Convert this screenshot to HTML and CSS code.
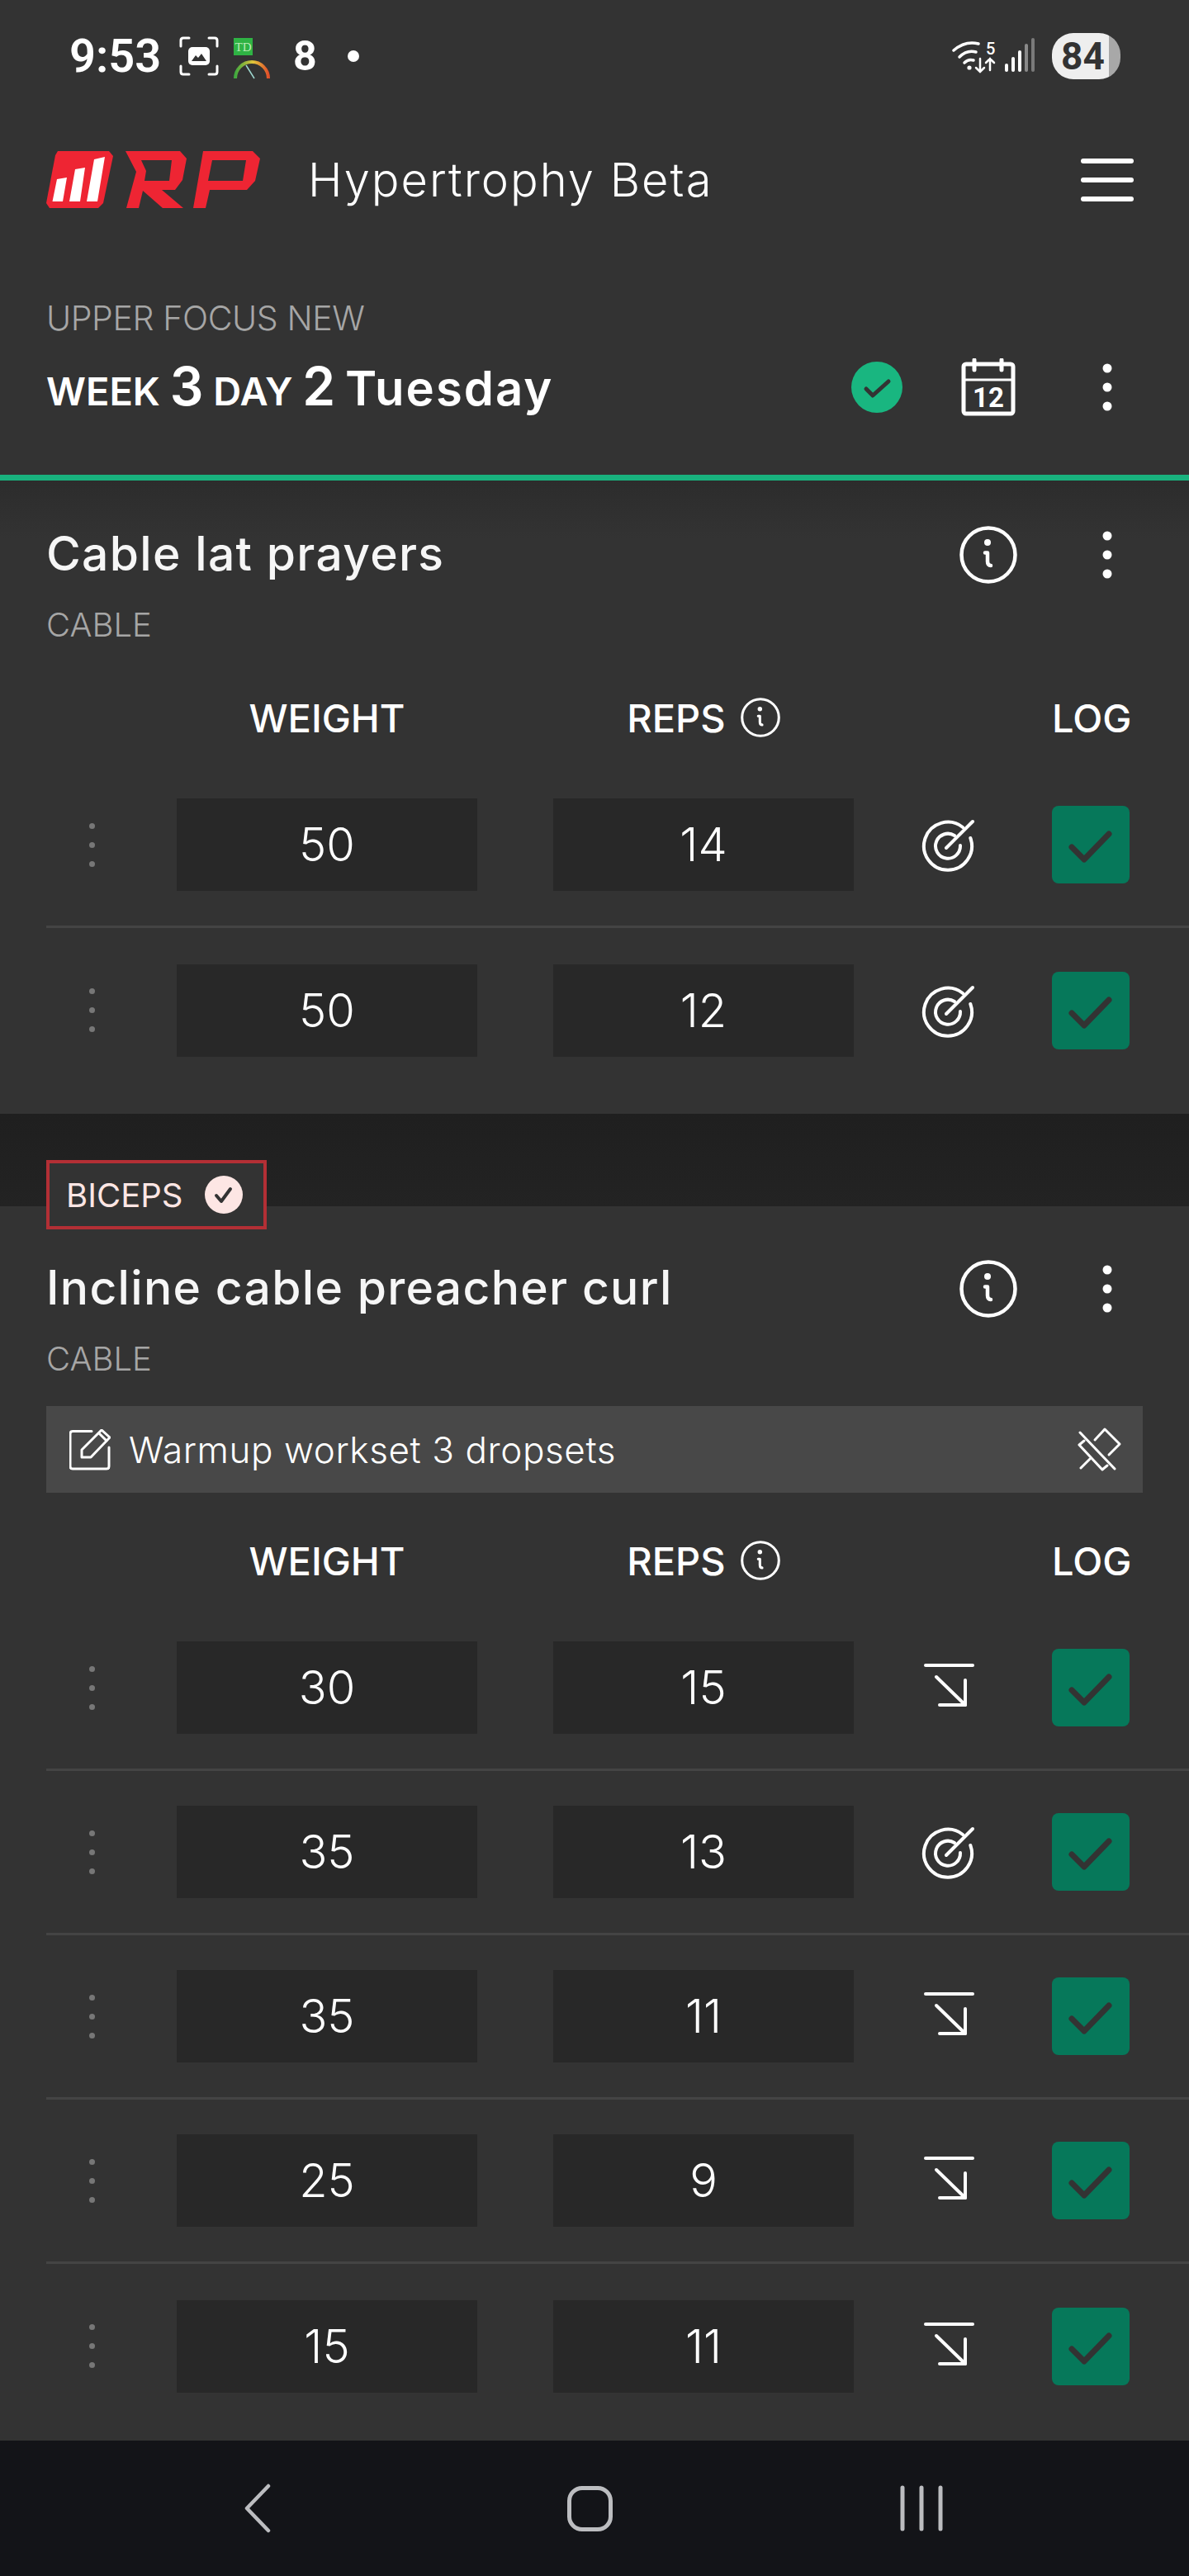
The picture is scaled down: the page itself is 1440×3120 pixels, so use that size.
FILE: index.html
```html
<!DOCTYPE html>
<html lang="en">

<head>
    <meta charset="UTF-8">
    <meta name="viewport" content="width=device-width, initial-scale=1.0">
    <title>RP Hypertrophy Beta</title>

    <link rel="stylesheet" href="styles.css">
</head>

<body>
    <svg class="sprites" width="0" height="0">
        <symbol id="i-info" viewBox="0 0 70 70">
            <circle cx="35" cy="35" r="32.5" fill="none" stroke="currentColor" stroke-width="4.5" />
            <circle cx="34" cy="20" r="4" fill="currentColor" />
            <path d="M31 32.5h3V43q0 5 4 5" fill="none" stroke="currentColor" stroke-width="4.5" stroke-linecap="round" stroke-linejoin="round" />
        </symbol>
        <symbol id="i-kebab" viewBox="0 0 70 70">
            <circle cx="35" cy="12" r="5.5" fill="currentColor" />
            <circle cx="35" cy="35" r="5.5" fill="currentColor" />
            <circle cx="35" cy="58" r="5.5" fill="currentColor" />
        </symbol>
        <symbol id="i-target" viewBox="0 0 70 70">
            <g fill="none" stroke="currentColor" stroke-width="4" stroke-linecap="round">
                <path d="M51 14A29 29 0 1 0 60.3 27" />
                <path d="M41 24A15 15 0 1 0 48 36" />
                <path d="M31 39L63 7" />
            </g>
        </symbol>
        <symbol id="i-drop" viewBox="0 0 70 70">
            <g fill="none" stroke="currentColor" stroke-width="4" stroke-linecap="round" stroke-linejoin="round">
                <path d="M6 8H63" />
                <path d="M19 22L54 56" />
                <path d="M54 26V56H23" />
            </g>
        </symbol>
        <symbol id="i-check" viewBox="0 0 94 94">
            <path d="M24 50L39 65L69 34" fill="none" stroke="currentColor" stroke-width="7" stroke-linecap="round" stroke-linejoin="round" />
        </symbol>
    </svg>

    <div class="status-bar">
        <span class="clock">9:53</span>
        <svg class="st-shot" width="48" height="48" viewBox="0 0 48 48">
            <path d="M2 12V5q0-3 3-3h7M36 2h7q3 0 3 3v7M46 36v7q0 3-3 3h-7M12 46H5q-3 0-3-3v-7" fill="none" stroke="#fff" stroke-width="3" stroke-linecap="round" />
            <rect x="11" y="13" width="26" height="22" rx="5" fill="#fff" />
            <path d="M15 30l5-7 3 3 4-5 6 9z" fill="#333" />
        </svg>
        <svg class="st-td" width="48" height="50" viewBox="0 0 48 50">
            <rect x="1" y="0" width="23" height="21" fill="#2fb344" />
            <text x="12.5" y="16" class="st-td-text">TD</text>
            <path d="M3 49A20 20 0 0 1 43 49" fill="none" stroke="url(#gauge)" stroke-width="4" />
            <path d="M16 33L26 49" stroke="#9fd8d0" stroke-width="1.5" />
            <defs>
                <linearGradient id="gauge">
                    <stop offset="0" stop-color="#3fa93f" />
                    <stop offset="0.55" stop-color="#e4c53a" />
                    <stop offset="1" stop-color="#e0502a" />
                </linearGradient>
            </defs>
        </svg>
        <span class="st-eight">8</span>
        <span class="st-dot"></span>
        <span class="st-spacer"></span>
        <svg class="st-wifi" width="54" height="42" viewBox="0 0 54 42">
            <g fill="none" stroke="#fff" stroke-width="3.5" stroke-linecap="round">
                <path d="M2 14Q16 2 32 6" />
                <path d="M9 22Q18 13 29 16" />
                <path d="M15 29Q20 24 26 26" />
                <path d="M34 24V40M29 35l5 5 5-5" stroke-width="2.5" />
                <path d="M46 38V24M41 29l5-5 5 5" stroke-width="2.5" />
            </g>
            <circle cx="21" cy="35" r="2.6" fill="#fff" />
            <text x="41" y="19" class="st-wifi-text">5</text>
        </svg>
        <svg class="st-signal" width="36" height="42" viewBox="0 0 36 42">
            <g stroke-width="4" stroke-linecap="round">
                <path d="M2 33V39" stroke="#fff" />
                <path d="M10 25V39" stroke="#fff" />
                <path d="M18 17V39" stroke="#fff" />
                <path d="M26 9V39" stroke="#8a8a8a" />
                <path d="M34 2V39" stroke="#7a7a7a" />
            </g>
        </svg>
        <span class="battery">84</span>
    </div>

    <header class="app-bar">
        <svg class="logo" width="260" height="70" viewBox="56 178 260 70">
            <path d="M70 178H132L137 184L125 241L119 247H60L56 241L67 183Z" fill="#ee2533" />
            <path d="M69 212L81 210L76 239H63.5ZM91 200L103 198L97 239H84ZM114 188L127 185L118 239H105Z" fill="#fff" />
            <path fill-rule="evenodd" d="M152 178H218L226 187L221 213L212 225H196L222 247H197L173 226L168 247H153L165 203ZM171 189L177 202L175 214H205L208 189Z" fill="#ee2533" />
            <path fill-rule="evenodd" d="M246 178H306L315 187L309 214L299 225H254L249 247H234ZM257 189L252 214H294L298 189Z" fill="#ee2533" />
        </svg>
        <span class="app-title">Hypertrophy Beta</span>
        <button class="menu-btn" type="button" aria-label="Menu"><i></i><i></i><i></i></button>
    </header>

    <section class="day-head">
        <div class="program">UPPER FOCUS NEW</div>
        <div class="day-row">
            <h1 class="day-title">WEEK <b>3</b> DAY <b>2</b> <em>Tuesday</em></h1>
            <div class="actions">
                <span class="done-badge">
                    <svg width="62" height="62" viewBox="0 0 62 62">
                        <path d="M18 33L26 41L45 24" fill="none" stroke="#333" stroke-width="5" stroke-linecap="round" stroke-linejoin="round" />
                    </svg>
                </span>
                <svg class="icon" width="70" height="70" viewBox="0 0 70 70">
                    <rect x="5" y="7" width="60" height="60" rx="3" fill="none" stroke="currentColor" stroke-width="5" />
                    <path d="M5 26H65" stroke="currentColor" stroke-width="3" />
                    <path d="M18 2V14M51 2V14" stroke="currentColor" stroke-width="5" stroke-linecap="round" />
                    <text x="35" y="59" class="cal-day">12</text>
                </svg>
                <svg class="icon" width="70" height="70"><use href="#i-kebab" /></svg>
            </div>
        </div>
    </section>

    <section class="card card-first">
        <div class="card-head">
            <h2 class="ex-name">Cable lat prayers</h2>
            <div class="actions">
                <svg class="icon" width="70" height="70"><use href="#i-info" /></svg>
                <svg class="icon" width="70" height="70"><use href="#i-kebab" /></svg>
            </div>
        </div>
        <div class="ex-kind">CABLE</div>
        <div class="col-heads">
            <span class="handle"></span>
            <span class="col">WEIGHT</span>
            <span class="col col-reps">REPS <svg width="48" height="48"><use href="#i-info" /></svg></span>
            <span class="cue"></span>
            <span class="log">LOG</span>
        </div>
        <div class="set-row">
            <span class="handle"><i></i><i></i><i></i></span>
            <span class="field">50</span>
            <span class="field">14</span>
            <span class="cue"><svg width="70" height="70"><use href="#i-target" /></svg></span>
            <span class="log log-box"><svg width="94" height="94"><use href="#i-check" /></svg></span>
        </div>
        <div class="set-row">
            <span class="handle"><i></i><i></i><i></i></span>
            <span class="field">50</span>
            <span class="field">12</span>
            <span class="cue"><svg width="70" height="70"><use href="#i-target" /></svg></span>
            <span class="log log-box"><svg width="94" height="94"><use href="#i-check" /></svg></span>
        </div>
    </section>

    <div class="muscle-band">
        <div class="muscle-tag">
            <span>BICEPS</span>
            <span class="tag-check">
                <svg width="46" height="46" viewBox="0 0 46 46">
                    <path d="M14 24L20 31L31 16" fill="none" stroke="#333" stroke-width="4" stroke-linecap="round" stroke-linejoin="round" />
                </svg>
            </span>
        </div>
    </div>

    <section class="card card-second">
        <div class="card-head">
            <h2 class="ex-name">Incline cable preacher curl</h2>
            <div class="actions">
                <svg class="icon" width="70" height="70"><use href="#i-info" /></svg>
                <svg class="icon" width="70" height="70"><use href="#i-kebab" /></svg>
            </div>
        </div>
        <div class="ex-kind">CABLE</div>
        <div class="note">
            <svg width="50" height="50" viewBox="0 0 50 50">
                <g fill="none" stroke="#fff" stroke-width="3" stroke-linecap="round" stroke-linejoin="round">
                    <path d="M27 2.5H4q-3 0-3 3V45q0 3 3 3H45q3 0 3-3V22" />
                    <path d="M15 25L39 1L49 10L26 34H15Z" />
                    <path d="M36 5L45 14" />
                </g>
            </svg>
            <span class="note-text">Warmup workset 3 dropsets</span>
            <svg class="note-pin" width="56" height="56" viewBox="0 0 56 56">
                <g fill="none" stroke="#fff" stroke-width="3" stroke-linecap="round" stroke-linejoin="round">
                    <path d="M4 7L46 51" />
                    <path d="M9 17L3 22L31 52L37 47" />
                    <path d="M22 16L34 3L52 21L39 34" />
                    <path d="M16 39L5 50" />
                </g>
            </svg>
        </div>
        <div class="col-heads">
            <span class="handle"></span>
            <span class="col">WEIGHT</span>
            <span class="col col-reps">REPS <svg width="48" height="48"><use href="#i-info" /></svg></span>
            <span class="cue"></span>
            <span class="log">LOG</span>
        </div>
        <div class="set-row">
            <span class="handle"><i></i><i></i><i></i></span>
            <span class="field">30</span>
            <span class="field">15</span>
            <span class="cue"><svg width="70" height="70"><use href="#i-drop" /></svg></span>
            <span class="log log-box"><svg width="94" height="94"><use href="#i-check" /></svg></span>
        </div>
        <div class="set-row">
            <span class="handle"><i></i><i></i><i></i></span>
            <span class="field">35</span>
            <span class="field">13</span>
            <span class="cue"><svg width="70" height="70"><use href="#i-target" /></svg></span>
            <span class="log log-box"><svg width="94" height="94"><use href="#i-check" /></svg></span>
        </div>
        <div class="set-row">
            <span class="handle"><i></i><i></i><i></i></span>
            <span class="field">35</span>
            <span class="field">11</span>
            <span class="cue"><svg width="70" height="70"><use href="#i-drop" /></svg></span>
            <span class="log log-box"><svg width="94" height="94"><use href="#i-check" /></svg></span>
        </div>
        <div class="set-row">
            <span class="handle"><i></i><i></i><i></i></span>
            <span class="field">25</span>
            <span class="field">9</span>
            <span class="cue"><svg width="70" height="70"><use href="#i-drop" /></svg></span>
            <span class="log log-box"><svg width="94" height="94"><use href="#i-check" /></svg></span>
        </div>
        <div class="set-row">
            <span class="handle"><i></i><i></i><i></i></span>
            <span class="field">15</span>
            <span class="field">11</span>
            <span class="cue"><svg width="70" height="70"><use href="#i-drop" /></svg></span>
            <span class="log log-box"><svg width="94" height="94"><use href="#i-check" /></svg></span>
        </div>
    </section>

    <nav class="nav-bar">
        <span class="nav-cell">
            <svg width="32" height="60" viewBox="0 0 32 60">
                <path d="M29 3L3 30L29 57" fill="none" stroke="#bcbdc0" stroke-width="4.5" stroke-linecap="round" stroke-linejoin="round" />
            </svg>
        </span>
        <span class="nav-cell"><span class="nav-home"></span></span>
        <span class="nav-cell">
            <svg width="52" height="56" viewBox="0 0 52 56">
                <path d="M3 3V53M26 3V53M49 3V53" fill="none" stroke="#bcbdc0" stroke-width="5" stroke-linecap="round" />
            </svg>
        </span>
    </nav>
</body>

</html>
```
FILE: styles.css
```css
* {
    box-sizing: border-box;
}

body {
    margin: 0;
    width: 1440px;
    height: 3120px;
    overflow: hidden;
    background: #333;
    color: #fff;
    font-family: Inter, "Noto Sans", sans-serif;
}

h1,
h2 {
    margin: 0;
    font: inherit;
}

.sprites {
    position: absolute;
}

svg {
    display: block;
}

/* status bar */
.status-bar {
    display: flex;
    align-items: center;
    height: 136px;
    padding: 0 83px 0 84px;
    font-family: Roboto, sans-serif;
}

.clock {
    width: 109px;
    font-size: 56px;
    font-weight: 600;
    line-height: 1;
    white-space: nowrap;
}

.st-shot {
    margin-left: 24px;
}

.st-td {
    margin-left: 17px;
    margin-top: 6px;
}

.st-td-text {
    font-family: "Liberation Serif", serif;
    font-size: 15px;
    fill: #bdeab6;
    text-anchor: middle;
}

.st-eight {
    margin-left: 25px;
    font-size: 50px;
    font-weight: 700;
    line-height: 1;
}

.st-dot {
    width: 14px;
    height: 14px;
    margin-left: 37px;
    border-radius: 50%;
    background: #fff;
}

.st-spacer {
    flex: 1;
}

.st-wifi-text {
    font-family: Roboto, sans-serif;
    font-size: 20px;
    font-weight: 500;
    fill: #fff;
}

.st-signal {
    margin-left: 10px;
    margin-top: -2px;
}

.battery {
    display: flex;
    align-items: center;
    justify-content: center;
    width: 83px;
    height: 56px;
    margin-left: 21px;
    padding-right: 8px;
    border-radius: 26px;
    background: linear-gradient(90deg, #eee 83%, #a8a8a8 83%);
    color: #333;
    font-size: 46px;
    font-weight: 700;
}

/* app bar */
.app-bar {
    display: flex;
    align-items: center;
    height: 164px;
    padding: 0 67px 0 56px;
}

.app-title {
    margin-left: 57px;
    font-size: 56px;
    font-weight: 300;
    letter-spacing: 2px;
    white-space: nowrap;
}

.menu-btn {
    display: flex;
    flex-direction: column;
    gap: 17px;
    width: 64px;
    margin-left: auto;
    padding: 0;
    border: 0;
    background: none;
}

.menu-btn i {
    height: 6px;
    border-radius: 3px;
    background: #fff;
}

/* day heading */
.day-head {
    height: 282px;
    padding: 60px 64px 0 56px;
    border-bottom: 7px solid #19b27e;
}

.program {
    font-size: 41px;
    font-weight: 300;
    letter-spacing: -0.4px;
    line-height: 50px;
    color: #a6a6a6;
}

.day-row {
    display: flex;
    align-items: center;
    justify-content: space-between;
    height: 70px;
    margin-top: 24px;
}

.day-title {
    margin-top: -4px;
    font-size: 47px;
    font-weight: 600;
    white-space: nowrap;
}

.day-title b {
    font-size: 64px;
    font-weight: 600;
}

.day-title em {
    font-size: 58px;
    font-style: normal;
    font-weight: 600;
    letter-spacing: 2px;
}

.actions {
    display: flex;
    align-items: center;
    gap: 74px;
}

.done-badge {
    width: 62px;
    height: 62px;
    margin-right: -5px;
    border-radius: 50%;
    background: #19b680;
}

.cal-day {
    font-family: Roboto, sans-serif;
    font-size: 33px;
    font-weight: 700;
    fill: currentColor;
    text-anchor: middle;
}

/* exercise cards */
.card {
    background: #333;
}

.card-first {
    padding: 55px 0 26px;
    background: linear-gradient(#2c2c2c, #333 70px);
}

.card-second {
    padding: 65px 0 15px;
}

.card-head {
    display: flex;
    align-items: center;
    justify-content: space-between;
    height: 70px;
    padding: 0 64px 0 56px;
}

.ex-name {
    margin-top: -3px;
    font-size: 57px;
    font-weight: 500;
    letter-spacing: 1.3px;
    color: #f6f6f6;
    white-space: nowrap;
}

.ex-kind {
    margin: 25px 0 32px 56px;
    font-size: 40px;
    font-weight: 300;
    line-height: 50px;
    color: #a6a6a6;
}

.card-first .ex-kind {
    margin-bottom: 52px;
}

.note {
    display: flex;
    align-items: center;
    height: 105px;
    margin: 0 56px 47px;
    padding: 0 24px 0 28px;
    background: #484848;
}

.note-text {
    margin-left: 22px;
    font-size: 44px;
    font-weight: 300;
    letter-spacing: 0.6px;
    white-space: nowrap;
}

.note-pin {
    margin-left: auto;
}

.col-heads,
.set-row {
    display: flex;
    align-items: center;
    padding-left: 56px;
}

.col-heads {
    height: 70px;
    margin-bottom: 21px;
    font-size: 47px;
    font-weight: 500;
}

.handle {
    display: flex;
    flex-direction: column;
    align-items: center;
    gap: 16px;
    width: 110px;
    margin-right: 48px;
}

.handle i {
    width: 7px;
    height: 7px;
    border-radius: 50%;
    background: #777;
}

.col {
    display: flex;
    align-items: center;
    justify-content: center;
    width: 364px;
}

.col-reps {
    gap: 18px;
    margin-left: 92px;
}

.cue {
    display: flex;
    justify-content: center;
    width: 232px;
}

.log {
    width: 94px;
    margin-left: 8px;
    text-align: center;
}

.set-row {
    height: 199px;
    border-bottom: 3px solid #444;
    margin-left: 56px;
    padding-left: 0;
}

.set-row:last-child {
    border-bottom: 0;
}

.field {
    display: flex;
    align-items: center;
    justify-content: center;
    width: 364px;
    height: 112px;
    background: #282828;
    font-size: 56px;
    font-weight: 300;
}

.field + .field {
    margin-left: 92px;
}

.log-box {
    height: 94px;
    border-radius: 8px;
    background: #06785a;
    color: #333;
}

/* muscle group band */
.muscle-band {
    height: 112px;
    padding: 56px 0 0 56px;
    background: linear-gradient(#1f1f1f, #232323);
}

.muscle-tag {
    position: relative;
    display: flex;
    align-items: center;
    width: 267px;
    height: 84px;
    padding-left: 20px;
    border: 4px solid #b32f35;
    background: #333;
    color: #fde6e4;
    font-size: 40px;
    font-weight: 400;
}

.tag-check {
    width: 46px;
    height: 46px;
    margin-left: auto;
    margin-right: 25px;
    border-radius: 50%;
    background: #fde6e4;
}

/* android nav */
.nav-bar {
    display: flex;
    justify-content: center;
    height: 164px;
    padding-right: 12px;
    background: #131418;
}

.nav-cell {
    display: flex;
    align-items: center;
    justify-content: center;
    width: 402px;
}

.nav-home {
    width: 55px;
    height: 55px;
    border: 5px solid #bcbdc0;
    border-radius: 18px;
}
```
